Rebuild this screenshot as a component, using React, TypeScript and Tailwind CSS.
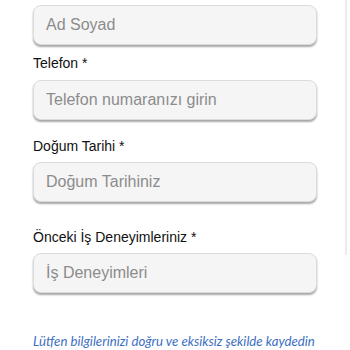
export default function App() {
  return (
    <div className="relative h-[350px] w-[350px] overflow-hidden bg-white font-['Liberation_Sans',Arial,sans-serif]">
      <div className="px-[33px] pr-[33px] pt-[5px]">
        <Field placeholder="Ad Soyad" />
        <Label className="mt-[8px]">Telefon *</Label>
        <Field placeholder="Telefon numaranızı girin" className="mt-[7px]" />
        <Label className="mt-[16px]">Doğum Tarihi *</Label>
        <Field placeholder="Doğum Tarihiniz" className="mt-[6px]" />
        <Label className="mt-[25px]">Önceki İş Deneyimleriniz *</Label>
        <Field placeholder="İş Deneyimleri" className="mt-[6px]" />
        <p className="mt-[38px] text-[13.2px] italic leading-5 text-[#3d6fc1] font-['Lato',sans-serif]">
          Lütfen bilgilerinizi doğru ve eksiksiz şekilde kaydedin
        </p>
      </div>
      <div className="absolute right-[3px] top-0 h-[255px] w-[2px] bg-[#ececec]" />
    </div>
  )
}

function Label({ children, className = '' }: { children: React.ReactNode; className?: string }) {
  return <div className={`text-sm leading-5 text-[#111] ${className}`}>{children}</div>
}

function Field({ placeholder, className = '' }: { placeholder: string; className?: string }) {
  return (
    <input
      readOnly
      placeholder={placeholder}
      className={`block h-10 w-[284px] rounded-lg border border-[#dcdcdc] bg-[#f5f5f5] px-3 text-base text-[#222] shadow-[0_2px_2px_rgba(0,0,0,0.35)] outline-none placeholder:text-[#8c8c8c] ${className}`}
    />
  )
}
